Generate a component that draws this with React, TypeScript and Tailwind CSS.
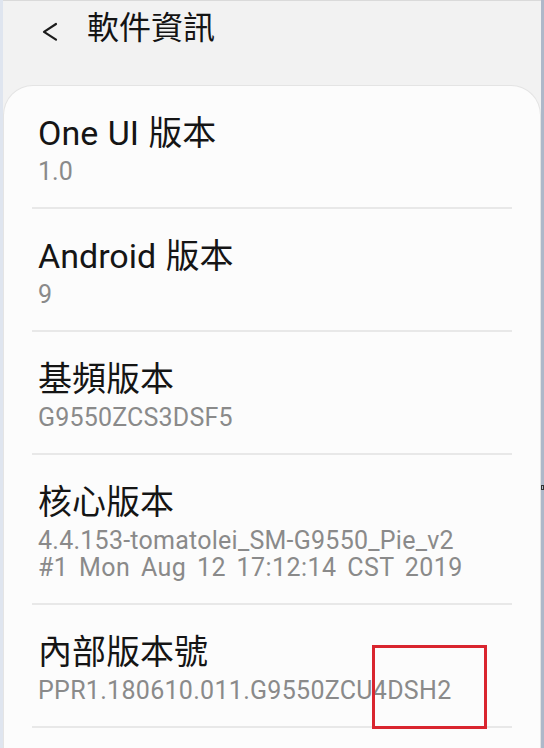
type Line = { text: string; cls?: string }

const items: { title: string; value: Line[] }[] = [
  { title: "One UI 版本", value: [{ text: "1.0" }] },
  { title: "Android 版本", value: [{ text: "9" }] },
  { title: "基頻版本", value: [{ text: "G9550ZCS3DSF5", cls: "tracking-[0.2px]" }] },
  {
    title: "核心版本",
    value: [
      { text: "4.4.153-tomatolei_SM-G9550_Pie_v2", cls: "tracking-[0.25px]" },
      { text: "#1 Mon Aug 12 17:12:14 CST 2019", cls: "-mt-[1px] [word-spacing:4px] tracking-[0.45px]" },
    ],
  },
  { title: "內部版本號", value: [{ text: "PPR1.180610.011.G9550ZCU4DSH2", cls: "tracking-[0.3px]" }] },
]

const font = { fontFamily: 'Roboto, "Noto Sans CJK TC", sans-serif' }

export default function App() {
  return (
    <div className="w-[544px] h-[748px] flex overflow-hidden bg-[#f2f2f2] relative" style={font}>
      {/* left edge strip */}
      <div className="w-[3px] shrink-0 bg-[#dfe5ef]" />

      <div className="flex-1 flex flex-col border-t border-[#dadada]">
        {/* Header */}
        <div className="h-[84px] shrink-0 flex items-start pt-[8px]">
          <svg className="ml-[37px] mt-[11px]" width="20" height="24" viewBox="0 0 20 24" fill="none">
            <path d="M16 4 L4 11.8 L16 19.6" stroke="#1c1c1c" strokeWidth="2.2" strokeLinecap="round" strokeLinejoin="round" />
          </svg>
          <h1 className="ml-[27px] text-[32px] leading-[38px] text-[#141414] font-normal">軟件資訊</h1>
        </div>

        {/* Card */}
        <div className="flex-1 bg-[#fcfcfc] rounded-t-[30px] border-t border-l border-r border-[#e4e4e4]">
          {items.map((item) => (
            <div key={item.title} className="mx-[28px]">
              <div className="pt-[28px] pb-[21px] pl-[6px]">
                <div className="text-[34px] leading-[38px] text-[#151515] [word-spacing:1px]">{item.title}</div>
                <div className="mt-[6px] text-[25px] leading-[28px] text-[#8a8a8a]">
                  {item.value.map((v) => (
                    <div key={v.text} className={v.cls}>{v.text}</div>
                  ))}
                </div>
              </div>
              <div className="h-[2px] bg-[#e8e8e8]" />
            </div>
          ))}
        </div>
      </div>

      {/* right edge strip */}
      <div className="w-[3px] shrink-0 bg-[#aeb8c9]" />

      {/* highlight box */}
      <div className="absolute left-[372px] top-[645px] w-[115px] h-[84px] border-[3px] border-[#d9252f]" />
      {/* small mark on right edge */}
      <div className="absolute left-[541px] top-[485px] w-[3px] h-[5px] border border-[#333]" />
    </div>
  )
}
